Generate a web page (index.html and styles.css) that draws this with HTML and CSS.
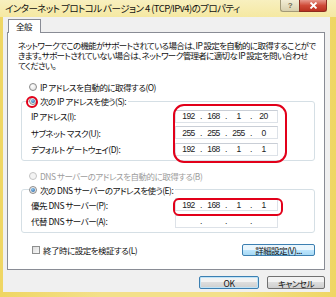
FILE: index.html
```html
<!DOCTYPE html>
<html>
<head>
<meta charset="utf-8">
<link rel="stylesheet" href="styles.css">
</head>
<body>

<div class="window">
  <div class="titlebar">
    <span class="title">インターネット プロトコル バージョン 4 (TCP/IPv4)のプロパティ</span>
    <span class="tb-btn help">?</span>
    <span class="tb-btn close">
      <svg width="9" height="7" viewBox="0 0 9 7"><path d="M1.5 0.5 L7.5 6.5 M7.5 0.5 L1.5 6.5" stroke="#fff" stroke-width="1.8" fill="none"/></svg>
    </span>
  </div>

  <div class="client">
    <div class="tabs"><span class="tab">全般</span></div>

    <div class="panel">
      <p class="desc">ネットワークでこの機能がサポートされている場合は、IP 設定を自動的に取得することがで<br>きます。サポートされていない場合は、ネットワーク管理者に適切な IP 設定を問い合わせ<br>てください。</p>

      <div class="opt"><span class="radio"></span>IP アドレスを自動的に取得する(O)</div>

      <fieldset class="group">
        <legend><span class="radio on"></span>次の IP アドレスを使う(S):</legend>
        <div class="row">
          <span>IP アドレス(I):</span>
          <span class="ip"><span class="o">192</span><span class="d">.</span><span class="o">168</span><span class="d">.</span><span class="o">1</span><span class="d">.</span><span class="o">20</span></span>
        </div>
        <div class="row">
          <span>サブネット マスク(U):</span>
          <span class="ip"><span class="o">255</span><span class="d">.</span><span class="o">255</span><span class="d">.</span><span class="o">255</span><span class="d">.</span><span class="o">0</span></span>
        </div>
        <div class="row">
          <span>デフォルト ゲートウェイ(D):</span>
          <span class="ip"><span class="o">192</span><span class="d">.</span><span class="o">168</span><span class="d">.</span><span class="o">1</span><span class="d">.</span><span class="o">1</span></span>
        </div>
      </fieldset>

      <div class="opt off"><span class="radio"></span>DNS サーバーのアドレスを自動的に取得する(B)</div>

      <fieldset class="group">
        <legend><span class="radio on"></span>次の DNS サーバーのアドレスを使う(E):</legend>
        <div class="row">
          <span>優先 DNS サーバー(P):</span>
          <span class="ip"><span class="o">192</span><span class="d">.</span><span class="o">168</span><span class="d">.</span><span class="o">1</span><span class="d">.</span><span class="o">1</span></span>
        </div>
        <div class="row">
          <span>代替 DNS サーバー(A):</span>
          <span class="ip"><span class="o"></span><span class="d">.</span><span class="o"></span><span class="d">.</span><span class="o"></span><span class="d">.</span><span class="o"></span></span>
        </div>
      </fieldset>

      <div class="check-row">
        <span class="check"><span class="box"></span>終了時に設定を検証する(L)</span>
        <span class="btn adv">詳細設定(V)...</span>
      </div>

      <!-- red marks drawn over the dialog -->
      <span class="mark ring-radio"></span>
      <span class="mark ring-ip"></span>
      <span class="mark ring-dns"></span>
    </div>

    <div class="actions">
      <span class="btn default">OK</span>
      <span class="btn">キャンセル</span>
    </div>
  </div>
</div>

</body>
</html>
```

FILE: styles.css
```css
* {
  box-sizing: border-box;
}

body {
  margin: 0;
  font-family: "Noto Sans CJK JP", sans-serif;
  font-size: 8.5px;
  letter-spacing: -0.5px;
  color: #111;
  font-feature-settings: "palt";
}

/* window frame */
.window {
  width: 336px;
  height: 297px;
  display: flex;
  flex-direction: column;
  padding: 0 6px 5px 3px;
  background: linear-gradient(90deg, #efd663, #f3e08a 30%, #f3e08a 70%, #efd663);
}

.titlebar {
  height: 17px;
  display: flex;
  align-items: flex-start;
  margin: 0 -6px 0 -3px;
  padding: 0 9px 0 5px;
  background: linear-gradient(#f8f0bf, #f5e8a2);
}

.title {
  flex: 1;
  font-size: 9.5px;
  line-height: 17px;
  white-space: nowrap;
  letter-spacing: -0.55px;
}

.tb-btn {
  height: 12px;
  display: flex;
  align-items: center;
  justify-content: center;
}

.help {
  width: 19px;
  background: linear-gradient(#f3edd5, #d8d0ad);
  border: 1px solid #a39a78;
  border-top: none;
  border-right: none;
  border-radius: 0 0 0 3px;
  color: #6e6853;
  font: bold 8px "Liberation Sans", sans-serif;
}

.close {
  width: 28px;
  background: linear-gradient(#e7998c, #cf4a38 50%, #b9311f);
  border: 1px solid #8d2c1f;
  border-top: none;
  border-radius: 0 0 3px 0;
}

/* dialog body */
.client {
  flex: 1;
  display: flex;
  flex-direction: column;
  padding: 2px 5px 3px 4px;
  background: #f0f0f0;
}

.tabs {
  display: flex;
  height: 13px;
  padding-left: 1px;
}

.tab {
  position: relative;
  z-index: 1;
  width: 33px;
  height: 14px;
  padding-left: 7px;
  line-height: 13px;
  background: #fff;
  border: 1px solid #898c95;
  border-bottom: none;
}

.panel {
  position: relative;
  height: 238px;
  display: flex;
  flex-direction: column;
  background: #fff;
  border: 1px solid #898c95;
}

.desc {
  margin: 7px 0 0 10px;
  line-height: 10px;
  white-space: nowrap;
  letter-spacing: -0.65px;
}

.opt {
  display: flex;
  align-items: center;
  height: 12px;
  margin: 11px 0 0 21px;
}

.opt + .group {
  margin-top: 2px;
}

.group + .opt {
  margin-top: 9px;
}

.opt.off {
  color: #9d9d9d;
}

.opt.off .radio {
  border-color: #c4c4c4;
  background: #f4f4f4;
}

.radio {
  position: relative;
  width: 8px;
  height: 8px;
  margin-right: 3px;
  border: 1px solid #8a8a8a;
  border-radius: 50%;
  background: radial-gradient(circle at 40% 35%, #fff, #dcdcdc);
}

.radio.on::after {
  content: "";
  position: absolute;
  left: 1px;
  top: 1px;
  width: 4px;
  height: 4px;
  border-radius: 50%;
  background: radial-gradient(circle at 40% 35%, #8fc6ef, #1c5a9c);
}

/* group boxes */
.group {
  margin: 0 9px 0 13px;
  padding: 1px 36px 2px 9px;
  min-width: 0;
  border: 1px solid #d5dfe5;
  border-radius: 3px;
}

.group legend {
  display: flex;
  align-items: center;
  height: 12px;
  margin-left: -2px;
  padding: 0 2px 0 0;
}

.row {
  display: flex;
  align-items: center;
  justify-content: space-between;
  height: 16.5px;
}

.ip {
  display: flex;
  align-items: center;
  width: 103px;
  height: 13px;
  padding: 0 3px;
  background: #fff;
  border: 1px solid #dde2e8;
  border-top-color: #c9ced6;
  font-family: "Liberation Sans", sans-serif;
  font-size: 8.5px;
  letter-spacing: -0.6px;
  color: #222;
}

.ip .o {
  width: 19px;
  text-align: center;
}

.ip .d {
  width: 6px;
  text-align: center;
}

/* checkbox + advanced */
.check-row {
  display: flex;
  align-items: center;
  justify-content: space-between;
  height: 13px;
  margin: 11px 9px 0 24px;
}

.check {
  display: flex;
  align-items: center;
}

.box {
  width: 8px;
  height: 8px;
  margin-right: 3px;
  border: 1px solid #8e8f8f;
  background: linear-gradient(135deg, #dcdcdc, #f8f8f8);
}

.btn {
  display: flex;
  align-items: center;
  justify-content: center;
  height: 13px;
  border: 1px solid #707070;
  border-radius: 2px;
  background: linear-gradient(#f2f2f2 50%, #dddddd 50%, #cfcfcf);
}

.btn.adv {
  width: 73px;
  height: 12px;
  border-color: #3c7fb1;
  background: linear-gradient(#eaf6fd 50%, #bee6fd 50%, #a7d9f5);
}

.actions {
  display: flex;
  justify-content: flex-end;
  gap: 8px;
  margin-top: 6px;
}

.actions .btn {
  width: 58px;
}

.actions .btn.default {
  width: 60px;
  border-color: #3c7fb1;
  box-shadow: inset 0 0 0 1px #bfe3f7;
}

/* red annotation marks */
.mark {
  position: absolute;
  border: 2px solid #e2001a;
}

.ring-radio {
  left: 18px;
  top: 63px;
  width: 12px;
  height: 12px;
  border-radius: 50%;
}

.ring-ip {
  left: 165px;
  top: 71px;
  width: 114px;
  height: 59px;
  border-radius: 11px;
}

.ring-dns {
  left: 165px;
  top: 165px;
  width: 110px;
  height: 18px;
  border-radius: 6px;
}
```
